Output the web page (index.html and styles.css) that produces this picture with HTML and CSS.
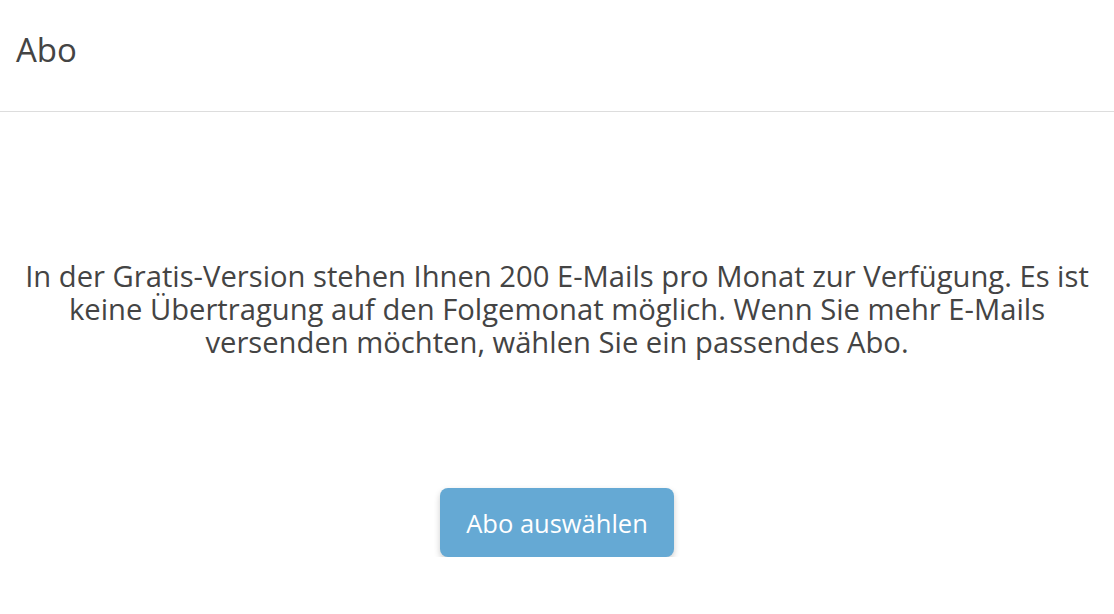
FILE: index.html
```html
<!DOCTYPE html>
<html lang="de">
<head>
    <meta charset="UTF-8">
    <title>Abo</title>
    <link rel="stylesheet" href="styles.css">
</head>
<body>
    <div class="header">
        <h1 class="title">Abo</h1>
    </div>
    <div class="content">
        <p class="info">In der Gratis-Version stehen Ihnen 200 E-Mails pro Monat zur Verfügung. Es ist keine Übertragung auf den Folgemonat möglich. Wenn Sie mehr E-Mails versenden möchten, wählen Sie ein passendes Abo.</p>
        <button class="btn">Abo auswählen</button>
    </div>
</body>
</html>
```

FILE: styles.css
```css
body{
    margin: 0;
    font-family: "Open Sans", "Noto Sans", sans-serif;
    color: #444;
    background: #fff;
}
.header{
    height: 111px;
    border-bottom: 1px solid #ddd;
    display: flex;
    align-items: center;
    padding: 0 16px;
}
.title{
    margin: 0;
    font-size: 33px;
    font-weight: normal;
    color: #444;
    position: relative;
    top: -6px;
}
.content{
    display: flex;
    flex-direction: column;
    align-items: center;
    padding: 148px 20px 0;
}
.info{
    margin: 0;
    font-size: 29.2px;
    line-height: 33px;
    text-align: center;
    max-width: 1080px;
}
.btn{
    margin-top: 129px;
    width: 234px;
    height: 69px;
    border: none;
    border-radius: 8px;
    background: #65a9d4;
    color: #fff;
    font-family: inherit;
    font-size: 25.5px;
    box-shadow: 0 3px 6px rgba(0,0,0,0.2);
}
```
